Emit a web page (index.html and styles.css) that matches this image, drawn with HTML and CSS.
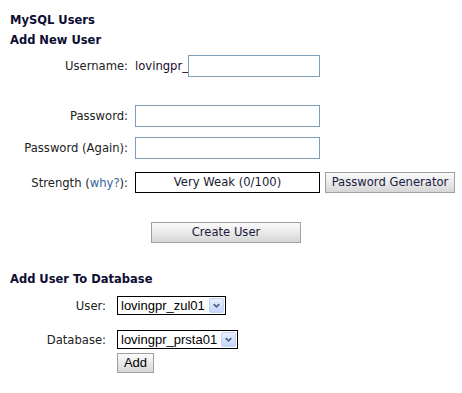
FILE: index.html
```html
<!DOCTYPE html>
<html>
<head>
<meta charset="utf-8">
<link rel="stylesheet" href="styles.css">
</head>
<body>
<div class="page">
  <h1 class="title">MySQL Users</h1>
  <h2 class="heading">Add New User</h2>
  <div class="form-grid">
    <div class="label">Username:</div>
    <div class="field field-user"><span class="prefix">lovingpr_</span><span class="input input-short"></span></div>
    <div class="label row-gap-big">Password:</div>
    <div class="field row-gap-big"><span class="input"></span></div>
    <div class="label row-gap">Password (Again):</div>
    <div class="field row-gap"><span class="input"></span></div>
    <div class="label row-gap2">Strength (<span class="link">why?</span>):</div>
    <div class="field row-gap2"><span class="strength">Very Weak (0/100)</span><span class="btn btn-gen">Password Generator</span></div>
  </div>
  <div class="create-row"><span class="btn btn-create">Create User</span></div>
  <h2 class="heading heading-db">Add User To Database</h2>
  <div class="db-grid">
    <div class="label">User:</div>
    <div class="field"><span class="select">lovingpr_zul01<span class="arrow"><svg width="14" height="14" viewBox="0 0 14 14"><path d="M4 5.5 L7 8.5 L10 5.5" fill="none" stroke="#4d6185" stroke-width="1.8"/></svg></span></span></div>
    <div class="label db-gap">Database:</div>
    <div class="field db-gap"><span class="select">lovingpr_prsta01<span class="arrow"><svg width="14" height="14" viewBox="0 0 14 14"><path d="M4 5.5 L7 8.5 L10 5.5" fill="none" stroke="#4d6185" stroke-width="1.8"/></svg></span></span></div>
    <div></div>
    <div class="field add-gap"><span class="btn btn-add">Add</span></div>
  </div>
</div>
</body>
</html>
```
FILE: styles.css
```css
html, body {
  margin: 0;
  padding: 0;
  background: #ffffff;
}
.page {
  padding: 14px 10px 0 10px;
  font-family: "DejaVu Sans", Verdana, sans-serif;
  font-size: 11.6px;
  color: #222222;
}
.title, .heading {
  margin: 0;
  font-size: 11.5px;
  font-weight: bold;
  color: #0d0d33;
  line-height: 13px;
}
.heading {
  margin-top: 7px;
}
.form-grid {
  display: grid;
  grid-template-columns: 118px auto;
  column-gap: 7px;
  margin-top: 8px;
  align-items: center;
}
.label {
  text-align: right;
  white-space: nowrap;
}
.field {
  display: flex;
  align-items: center;
}
.field-user {
  width: 185px;
}
.row-gap-big { margin-top: 28px; }
.row-gap { margin-top: 10px; }
.row-gap2 { margin-top: 13px; }
.prefix {
  color: #1a0d33;
}
.input {
  display: inline-block;
  box-sizing: border-box;
  width: 185px;
  height: 22px;
  border: 1px solid #7f9db9;
  background: #fff;
}
.input-short {
  width: auto;
  flex: 1;
}
.link {
  color: #336699;
}
.strength {
  display: inline-block;
  box-sizing: border-box;
  width: 185px;
  height: 21px;
  border: 1px solid #000;
  text-align: center;
  line-height: 19px;
  color: #1a1a33;
}
.btn {
  display: inline-block;
  box-sizing: border-box;
  border: 1px solid #a0a0a0;
  background: linear-gradient(#fbfbfb, #e6e6e6 60%, #d6d6d6);
  color: #1a1a40;
  text-align: center;
  white-space: nowrap;
}
.btn-gen {
  margin-left: 5px;
  width: 130px;
  height: 21px;
  line-height: 19px;
}
.create-row {
  margin-top: 29px;
  padding-left: 141px;
}
.btn-create {
  width: 150px;
  height: 21px;
  line-height: 19px;
}
.heading-db {
  margin-top: 30px;
}
.db-grid {
  display: grid;
  grid-template-columns: 96px auto;
  column-gap: 11px;
  margin-top: 10px;
  align-items: center;
}
.db-gap { margin-top: 15px; }
.add-gap { margin-top: 4px; }
.select {
  display: inline-flex;
  align-items: center;
  box-sizing: border-box;
  height: 19px;
  border: 1px solid #000;
  padding: 0 1px 0 3px;
  font-family: "Liberation Sans", Arial, sans-serif;
  font-size: 13px;
  color: #000;
  gap: 4px;
}
.arrow {
  display: inline-block;
  width: 15px;
  height: 15px;
  box-sizing: border-box;
  border: 1px solid #c3d3f3;
  border-radius: 2px;
  background: linear-gradient(#e8effd, #c6d6fb);
}
.arrow svg {
  display: block;
  width: 13px;
  height: 13px;
}
.btn-add {
  width: 37px;
  height: 20px;
  line-height: 18px;
  font-family: "Liberation Sans", Arial, sans-serif;
  font-size: 13px;
  color: #000;
}
```
